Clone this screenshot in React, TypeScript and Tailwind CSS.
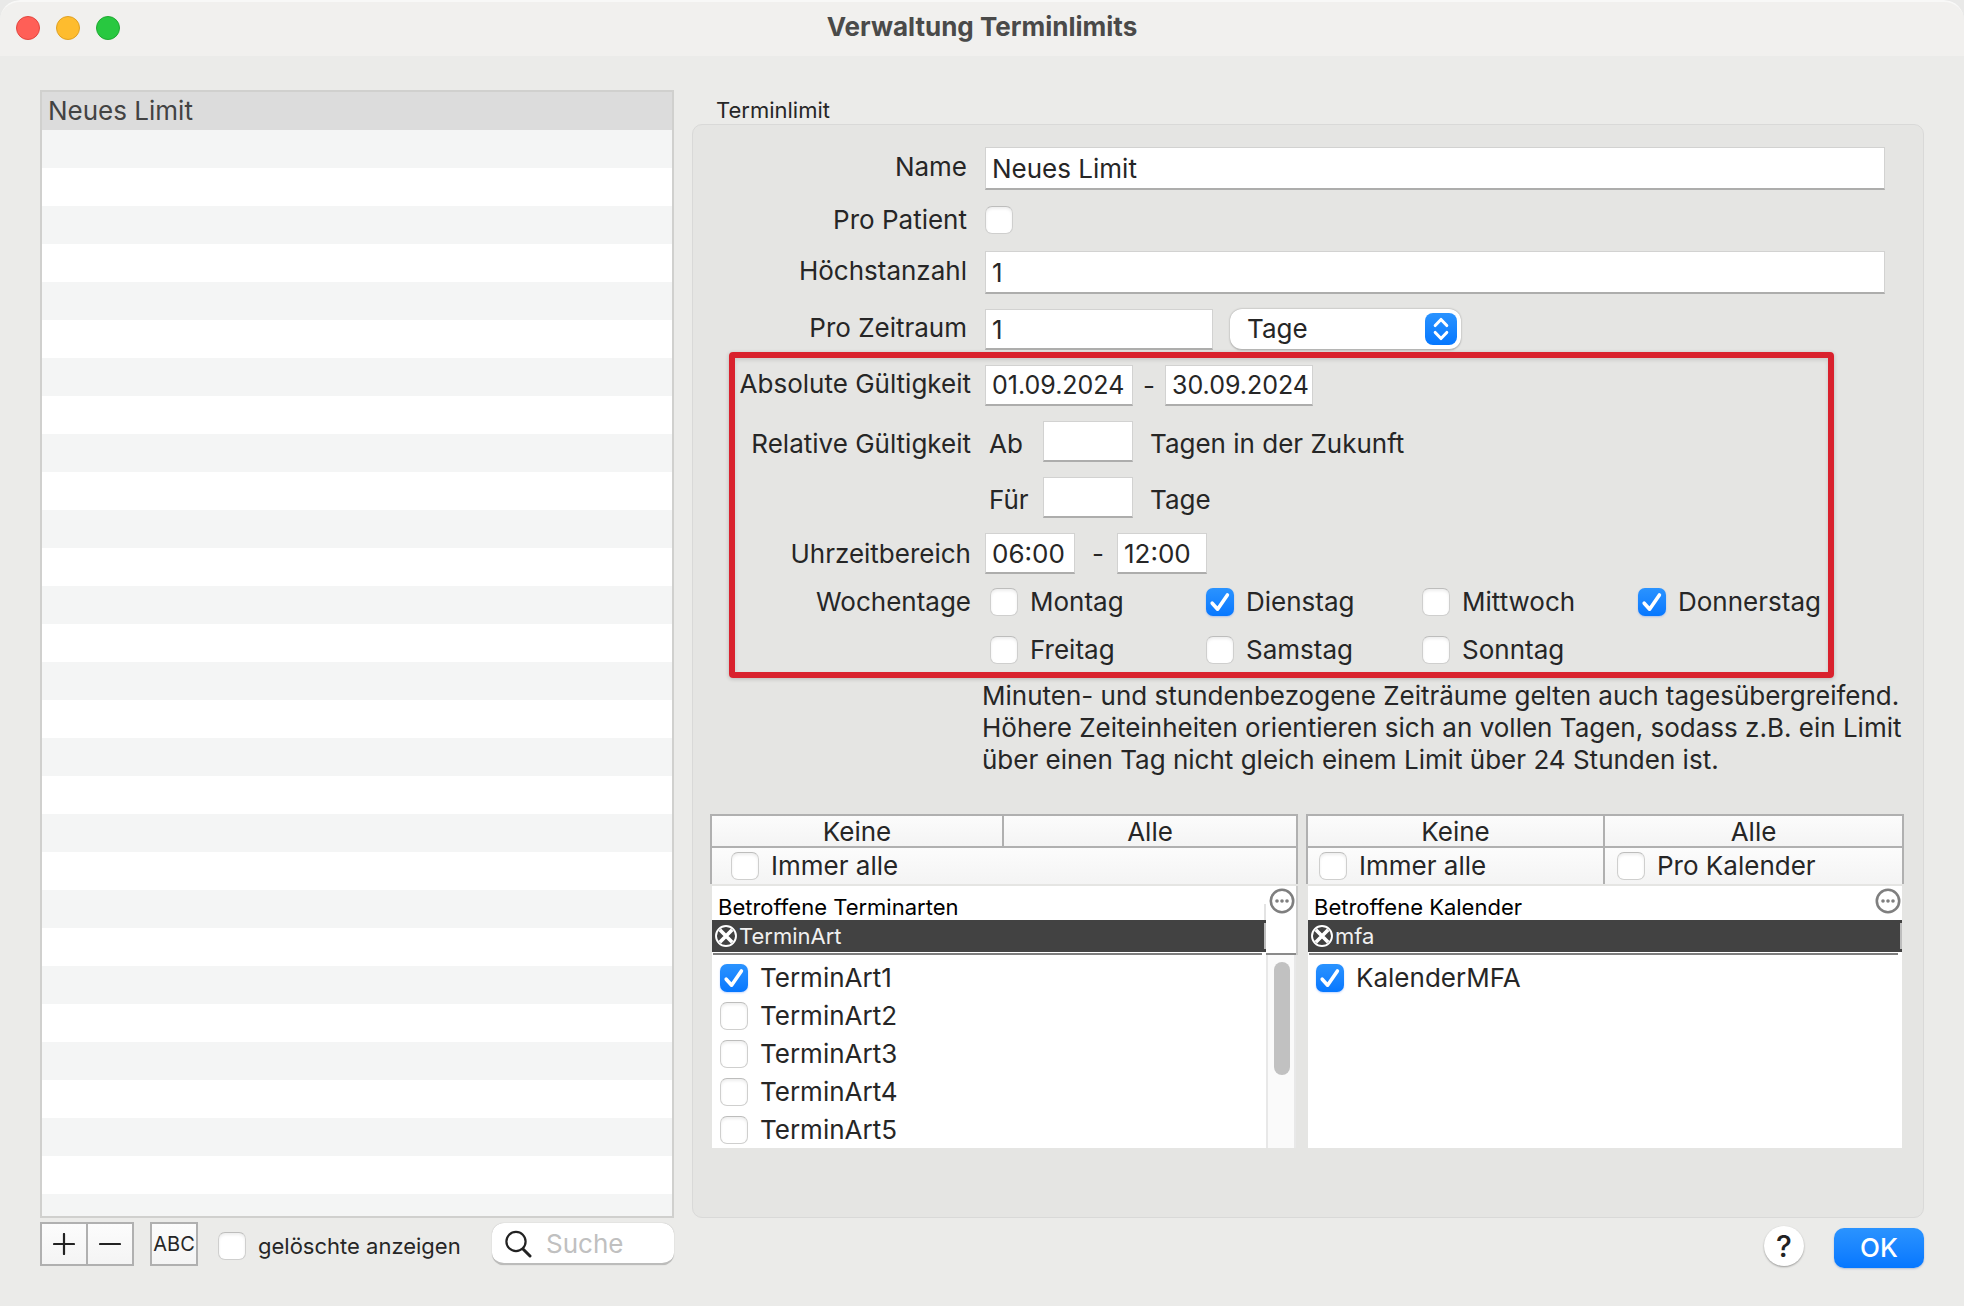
import React, { useId, useState } from "react";

function Check({
  label,
  defaultChecked = false,
  size = "text-[26px]",
}: {
  label: string;
  defaultChecked?: boolean;
  size?: string;
}) {
  return (
    <label className={`flex items-center gap-3 leading-7 whitespace-nowrap ${size}`}>
      <Box defaultChecked={defaultChecked} />
      {label}
    </label>
  );
}

function Box({ defaultChecked = false, id }: { defaultChecked?: boolean; id?: string }) {
  return (
    <span className="grid size-7 shrink-0">
      <input
        id={id}
        type="checkbox"
        defaultChecked={defaultChecked}
        className="peer col-start-1 row-start-1 size-7 appearance-none rounded-[7px] border border-[#cfcfce] border-t-[#bdbdbc] bg-white shadow-[inset_0_2px_3px_rgba(0,0,0,0.07)] checked:border-0 checked:bg-linear-to-b checked:from-[#2a93ff] checked:to-[#0577ff] checked:shadow-[0_1px_2px_rgba(0,90,255,0.25)]"
      />
      <svg
        viewBox="0 0 28 28"
        className="pointer-events-none invisible col-start-1 row-start-1 size-7 peer-checked:visible"
        fill="none"
        stroke="#fff"
        strokeWidth="3.6"
        strokeLinecap="round"
        strokeLinejoin="round"
      >
        <path d="M6.2 15.2 11.6 21.2 21.4 7" />
      </svg>
    </span>
  );
}

function Field({
  value = "",
  className,
  label,
  id,
}: {
  value?: string;
  className: string;
  label?: string;
  id?: string;
}) {
  return (
    <input
      id={id}
      type="text"
      aria-label={label}
      defaultValue={value}
      className={`min-w-0 border border-[#d2d2d1] border-b-2 border-b-[#adadac] bg-white pl-1.5 outline-none ${className}`}
    />
  );
}

function Clear() {
  return (
    <svg viewBox="0 0 24 24" className="size-6" fill="none" stroke="#fff">
      <circle cx="12" cy="12" r="10" strokeWidth="1.9" />
      <path d="M5.800 5.800l12.400 12.400M18.200 5.800l-12.400 12.400" strokeWidth="3.7" />
    </svg>
  );
}

function More() {
  return (
    <button type="button" aria-label="Mehr" className="block">
      <svg viewBox="0 0 26 26" className="size-[26px]" fill="none" stroke="#7f7f7f">
        <circle cx="13" cy="13" r="11.2" strokeWidth="2.6" />
        <g fill="#7f7f7f" stroke="none">
          <circle cx="8" cy="13" r="1.8" />
          <circle cx="13" cy="13" r="1.8" />
          <circle cx="18" cy="13" r="1.8" />
        </g>
      </svg>
    </button>
  );
}

const cell = "bg-linear-to-b from-[#fcfcfc] to-[#f4f4f4]";

function SelectButtons() {
  return (
    <div className="grid h-8 grid-cols-2 divide-x-2 divide-[#b0b0b0] border-b-2 border-[#b0b0b0] leading-7">
      <button type="button" className={`pt-0.5 ${cell}`}>
        Keine
      </button>
      <button type="button" className={`pt-0.5 ${cell}`}>
        Alle
      </button>
    </div>
  );
}

function FilterBar({ value, label }: { value: string; label: string }) {
  return (
    <>
      <div className="flex h-8 items-center bg-[#424242] pl-0.5 text-[22px] text-white">
        <button type="button" aria-label="Filter löschen">
          <Clear />
        </button>
        <input
          aria-label={label}
          defaultValue={value}
          className="ml-px h-[26px] min-w-0 flex-1 border-r-2 border-[#bdbdbd] bg-transparent text-[#f0f0f0] outline-none"
        />
      </div>
      <div className="mt-px mr-1 ml-px h-0.5 bg-[#7d7d7d]" />
    </>
  );
}

function Days() {
  const days: [string, boolean][] = [
    ["Montag", false],
    ["Dienstag", true],
    ["Mittwoch", false],
    ["Donnerstag", true],
    ["Freitag", false],
    ["Samstag", false],
    ["Sonntag", false],
  ];
  return (
    <div className="ml-[5px] grid grid-cols-[216px_216px_216px_auto] gap-y-5">
      {days.map(([d, on]) => (
        <Check key={d} label={d} defaultChecked={on} />
      ))}
    </div>
  );
}

export default function App() {
  const id = useId();
  const [rows] = useState(() => Array.from({ length: 29 }, (_, i) => i));
  return (
    <div className="bg-[#e9e9e8]">
      <div className="flex min-h-screen flex-col overflow-hidden rounded-t-[20px] bg-[#ebebe9] font-[Inter,sans-serif] text-[26px] leading-8 text-[#262626]">
        <header className="grid h-14 grid-cols-[1fr_auto_1fr] items-center rounded-t-[20px] border-t-2 border-[#f8f8f7] bg-[#f1f0ee] px-4 pb-0.5">
          <div className="flex gap-4">
            <button type="button" aria-label="Schließen" className="size-6 rounded-full border border-[#e2463f] bg-[#ff5f57]" />
            <button type="button" aria-label="Minimieren" className="size-6 rounded-full border border-[#dfa023] bg-[#febc2e]" />
            <button type="button" aria-label="Zoomen" className="size-6 rounded-full border border-[#1fa931] bg-[#28c840]" />
          </div>
          <h1 className="pb-0.5 font-bold text-[#4a4a49]">Verwaltung Terminlimits</h1>
          <span />
        </header>

        <main className="flex flex-1 gap-[18px] px-10 pt-[34px]">
          <section className="flex w-[634px] shrink-0 flex-col">
            <ul className="h-[1128px] overflow-hidden border-2 border-[#d0d0ce] bg-white">
              <li className="h-[38px] bg-[#dcdcdc] pl-1.5 leading-[38px] text-[#434343]">Neues Limit</li>
              {rows.map((i) => (
                <li key={i} className="h-[38px] odd:bg-white even:bg-[#f4f5f5]" />
              ))}
            </ul>
            <div className="mt-1 flex h-11 items-center">
              <div className="flex h-11 w-[94px] divide-x-2 divide-[#b0b0b0] border-2 border-[#b0b0b0]">
                <button type="button" aria-label="Hinzufügen" className={`grid flex-1 place-items-center ${cell}`}>
                  <svg viewBox="0 0 22 22" className="size-[22px]" stroke="#222" strokeWidth="2.2" strokeLinecap="round">
                    <path d="M11 1v20M1 11h20" />
                  </svg>
                </button>
                <button type="button" aria-label="Entfernen" className={`grid flex-1 place-items-center ${cell}`}>
                  <svg viewBox="0 0 22 22" className="size-[22px]" stroke="#222" strokeWidth="2.2" strokeLinecap="round">
                    <path d="M1 11h20" />
                  </svg>
                </button>
              </div>
              <button type="button" className={`ml-4 h-11 w-12 border-2 border-[#b0b0b0] text-center text-[20px] ${cell}`}>
                ABC
              </button>
              <div className="mt-1 ml-5">
                <Check label="gelöschte anzeigen" size="text-[22px]" />
              </div>
              <label className="ml-auto flex h-[42px] w-[182px] items-center rounded-xl border-b-2 border-[#bcbcbb] bg-white pt-0.5 pl-3 shadow-[0_0_1px_rgba(0,0,0,0.3)]">
                <svg viewBox="0 0 28 28" className="size-7" fill="none" stroke="#222" strokeLinecap="round">
                  <circle cx="12" cy="11.5" r="9.6" strokeWidth="2.2" />
                  <path d="M19 19l7 7" strokeWidth="3" />
                </svg>
                <input
                  type="search"
                  aria-label="Suche"
                  placeholder="Suche"
                  className="ml-3.5 w-28 min-w-0 bg-transparent outline-none placeholder:text-[#c0c0c0]"
                />
              </label>
            </div>
          </section>

          <section className="flex min-w-0 flex-1 flex-col">
            <h2 className="h-[34px] pl-6 text-[22px] leading-10">Terminlimit</h2>
            <div className="h-[1094px] rounded-[10px] border border-[#d9d9d8] bg-[#e5e5e3] pt-[22px]">
              <div className="mr-[38px] ml-9 grid grid-cols-[238px_1fr] items-center gap-x-[18px]">
                <label htmlFor={`${id}n`} className="pb-1 text-right">
                  Name
                </label>
                <Field id={`${id}n`} value="Neues Limit" className="h-[43px]" />
                <label htmlFor={`${id}p`} className="mt-4 h-7 text-right leading-7">
                  Pro Patient
                </label>
                <div className="mt-4">
                  <Box id={`${id}p`} />
                </div>
                <label htmlFor={`${id}h`} className="mt-[17px] pb-1 text-right">
                  Höchstanzahl
                </label>
                <Field id={`${id}h`} value="1" className="mt-[17px] h-[43px]" />
                <label htmlFor={`${id}z`} className="mt-[15px] pb-1 text-right">
                  Pro Zeitraum
                </label>
                <div className="mt-[15px] flex items-center">
                  <Field id={`${id}z`} value="1" className="h-[41px] w-[228px]" />
                  <div className="ml-[17px] grid h-[41px] w-[231px] items-center rounded-xl border-b border-[#b5b5b4] bg-white shadow-[0_0_2px_rgba(0,0,0,0.35)]">
                    <select aria-label="Zeiteinheit" className="col-start-1 row-start-1 h-10 appearance-none pl-[17px] outline-none">
                      <option>Tage</option>
                    </select>
                    <svg viewBox="0 0 32 32" className="pointer-events-none col-start-1 row-start-1 mr-1 size-8 justify-self-end">
                      <defs>
                        <linearGradient id="cap" x1="0" y1="0" x2="0" y2="1">
                          <stop offset="0" stopColor="#2a93ff" />
                          <stop offset="1" stopColor="#0577ff" />
                        </linearGradient>
                      </defs>
                      <rect width="32" height="32" rx="8" fill="url(#cap)" />
                      <path
                        d="M10.200 12.600 16 6.400 21.800 12.600M10.200 19.400 16 25.600 21.800 19.400"
                        fill="none"
                        stroke="#fff"
                        strokeWidth="3"
                        strokeLinecap="round"
                        strokeLinejoin="round"
                      />
                    </svg>
                  </div>
                </div>
              </div>

              <div className="mt-0.5 ml-9 w-[1105px] rounded-[4px] border-[6px] border-[#d9212d] pt-[7px] pb-2 shadow-[0_1px_4px_rgba(0,0,0,0.2),inset_0_2px_4px_rgba(0,0,0,0.12)]">
                <div className="grid grid-cols-[236px_1fr] items-center gap-x-[14px]">
                  <span className="pb-1 text-right">Absolute Gültigkeit</span>
                  <div className="flex items-center">
                    <Field label="Gültig von" value="01.09.2024" className="h-[41px] w-[148px] text-[25px]" />
                    <span className="w-8 text-center">-</span>
                    <Field label="Gültig bis" value="30.09.2024" className="h-[41px] w-[148px] text-[25px]" />
                  </div>
                  <span className="mt-[15px] pt-1 text-right">Relative Gültigkeit</span>
                  <div className="mt-[15px] flex items-center">
                    <label htmlFor={`${id}a`} className="w-[58px] pt-1 pl-1">
                      Ab
                    </label>
                    <Field id={`${id}a`} className="h-[41px] w-[90px]" />
                    <span className="ml-[17px] pt-1">Tagen in der Zukunft</span>
                  </div>
                  <div className="col-start-2 mt-[15px] flex items-center">
                    <label htmlFor={`${id}f`} className="w-[58px] pt-1 pl-1">
                      Für
                    </label>
                    <Field id={`${id}f`} className="h-[41px] w-[90px]" />
                    <span className="ml-[17px] pt-1">Tage</span>
                  </div>
                  <span className="mt-[15px] text-right">Uhrzeitbereich</span>
                  <div className="mt-[15px] flex items-center">
                    <Field label="Uhrzeit von" value="06:00" className="h-[41px] w-[90px]" />
                    <span className="w-[42px] pl-1 text-center">-</span>
                    <Field label="Uhrzeit bis" value="12:00" className="h-[41px] w-[90px]" />
                  </div>
                </div>
                <div className="mt-[14px] grid grid-cols-[236px_1fr] gap-x-[14px]">
                  <span className="text-right leading-7">Wochentage</span>
                  <Days />
                </div>
              </div>

              <p className="mt-0.5 mr-2 ml-[289px]">
                Minuten- und stundenbezogene Zeiträume gelten auch tagesübergreifend.
                <br />
                Höhere Zeiteinheiten orientieren sich an vollen Tagen, sodass z.B. ein Limit
                <br />
                über einen Tag nicht gleich einem Limit über 24 Stunden ist.
              </p>

              <div className="mt-[38px] mr-[19px] ml-[17px] flex gap-2">
                <div className="w-[588px] shrink-0">
                  <div className="border-2 border-b-0 border-[#b0b0b0]">
                    <SelectButtons />
                    <div className={`flex h-9 items-center pl-[19px] ${cell}`}>
                      <Check label="Immer alle" />
                    </div>
                  </div>
                  <div className="mx-0.5 mt-0.5 flex h-[262px] bg-white">
                    <div className="min-w-0 flex-1">
                      <div className="flex h-[34px] items-end justify-between">
                        <h3 className="pl-1.5 text-[22px] leading-[25px] text-black">Betroffene Terminarten</h3>
                        <div className="h-4 w-0.5 bg-[#e3e3e3]" />
                      </div>
                      <FilterBar label="Terminarten filtern" value="TerminArt" />
                      <div className="mt-[9px] ml-2 flex flex-col gap-2.5">
                        {[1, 2, 3, 4, 5].map((n) => (
                          <Check key={n} label={`TerminArt${n}`} defaultChecked={n === 1} />
                        ))}
                      </div>
                    </div>
                    <div className="flex w-[30px] flex-col">
                      <div className="h-[69px] border-b-2 border-[#8a8a8a] pt-0.5 pl-[3px] shadow-[2px_0_0_#cbcbca]">
                        <More />
                      </div>
                      <div className="flex flex-1 justify-center border-x-2 border-[#e8e8e8] bg-[#fafafa] pt-[7px] pl-0.5">
                        <div className="h-[113px] w-4 rounded-full bg-[#c1c1c1]" />
                      </div>
                    </div>
                  </div>
                </div>

                <div className="min-w-0 flex-1">
                  <div className="border-2 border-b-0 border-[#b0b0b0]">
                    <SelectButtons />
                    <div className={`grid h-9 grid-cols-2 divide-x-2 divide-[#b0b0b0] ${cell}`}>
                      <div className="flex items-center pl-[11px]">
                        <Check label="Immer alle" />
                      </div>
                      <div className="flex items-center pl-3">
                        <Check label="Pro Kalender" />
                      </div>
                    </div>
                  </div>
                  <div className="mx-0.5 mt-0.5 h-[262px] bg-white">
                    <div className="flex h-[34px] items-end justify-between pr-px">
                      <h3 className="pl-1.5 text-[22px] leading-[25px] text-black">Betroffene Kalender</h3>
                      <div className="h-8">
                        <More />
                      </div>
                    </div>
                    <FilterBar label="Kalender filtern" value="mfa" />
                    <div className="mt-[9px] ml-2">
                      <Check label="KalenderMFA" defaultChecked />
                    </div>
                  </div>
                </div>
              </div>
            </div>
            <div className="mt-2 flex items-start justify-end gap-[30px]">
              <button type="button" aria-label="Hilfe" className="size-10 rounded-full bg-white text-[30px] leading-10 font-medium text-[#222] shadow-[0_1px_2px_rgba(0,0,0,0.35)]">
                ?
              </button>
              <button type="button" className="mt-0.5 h-10 w-[90px] rounded-[10px] bg-linear-to-b from-[#2a93ff] to-[#0577ff] font-medium text-white shadow-[0_1px_2px_rgba(0,60,160,0.25)]">
                OK
              </button>
            </div>
          </section>
        </main>
      </div>
    </div>
  );
}
